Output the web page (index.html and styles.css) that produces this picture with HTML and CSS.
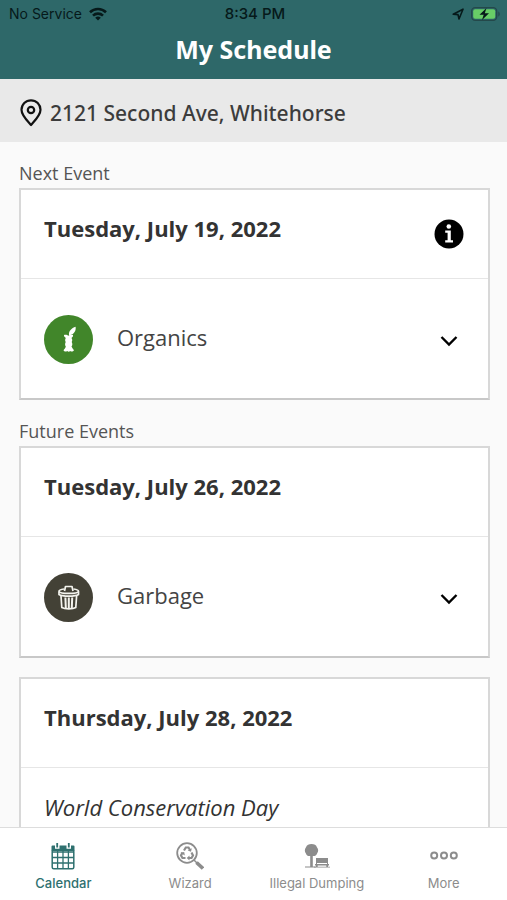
FILE: index.html
```html
<!DOCTYPE html>
<html lang="en">
<head>
<meta charset="utf-8">
<meta name="viewport" content="width=device-width, initial-scale=1">
<title>My Schedule</title>
<link rel="stylesheet" href="styles.css">
</head>
<body>
<header>
  <div class="status">
    <div class="carrier">
      No Service
      <svg width="18" height="14" viewBox="0 0 18 14" fill="none" stroke="#06191a" stroke-width="2.6">
        <path d="M1 5.2a11.6 11.6 0 0 1 16 0"/>
        <path d="M4 8.6a7.2 7.2 0 0 1 10 0"/>
        <path d="M9 13.4L6.2 10.8a4 4 0 0 1 5.6 0z" fill="#06191a" stroke="none"/>
      </svg>
    </div>
    <time class="clock">8:34 PM</time>
    <div class="power">
      <svg width="12" height="12" viewBox="0 0 12 12" fill="none" stroke="#06191a" stroke-width="1.6" stroke-linejoin="round">
        <path d="M1.2 6.2L11 1.2 7 11 6 6.6z"/>
      </svg>
      <svg width="30" height="14" viewBox="0 0 30 14">
        <rect x="0.7" y="0.7" width="25" height="12.6" rx="3.5" fill="none" stroke="#24484a" stroke-width="1.3"/>
        <rect x="2.2" y="2.2" width="22" height="9.6" rx="2" fill="#68ce67"/>
        <path d="M27.3 4.5c1.9.5 1.9 4.5 0 5z" fill="#24484a"/>
        <path d="M15.5 1L8.5 7.8h4.2L11 13l7-6.8h-4.2z" fill="#06191a"/>
      </svg>
    </div>
  </div>
  <h1>My Schedule</h1>
</header>

<div class="address">
  <svg width="22" height="28" viewBox="0 0 22 28" fill="none" stroke="#111" stroke-width="2.2">
    <path d="M11 26C7.5 22 1.5 16.5 1.5 10.8a9.500 9.500 0 0 1 19 0C20.5 16.5 14.5 22 11 26z" stroke-linejoin="round"/>
    <circle cx="11" cy="11" r="3.2"/>
  </svg>
  2121 Second Ave, Whitehorse
</div>

<main>
  <h2>Next Event</h2>
  <section class="card">
    <div class="card-head">
      <h3>Tuesday, July 19, 2022</h3>
      <button class="info" aria-label="Information">
        <svg width="30" height="30" viewBox="0 0 30 30">
          <circle cx="15" cy="15" r="14.5" fill="#000"/>
          <circle cx="14.8" cy="7.5" r="2.3" fill="#fff"/>
          <path d="M11.2 11.5h5.6v9.8H19v2.2h-7.8v-2.2h2.4v-7.600h-2.400z" fill="#fff"/>
        </svg>
      </button>
    </div>
    <button class="pickup">
      <svg class="badge" viewBox="0 0 49 49">
        <circle cx="24.5" cy="24.5" r="24.5" fill="#41862a"/>
        <g fill="#fff">
          <path d="M25 20c-.6-4 2.5-6.8 6.6-8.2.6 4-1.6 7.4-5.1 8.2z"/>
          <path d="M20 20c2-.6 3.5.2 4.5.8.9-.6 2.5-1.3 4.5-.7.3 1.4-.6 2.1-1.5 2.8.9 1.6 1 2.6.2 4 .9 1.6.9 3-.2 4.7.6 1.4 1.6 2.5 2.5 3.6-.9 1.6-2.6 1.8-3.8.8-1 .9-2 .9-3 0-1.2 1-3 .8-3.7-.8 1-1.1 2-2.2 2.3-3.600-1-1.700-.9-3.100-.1-4.700-.8-1.400-.7-2.400.1-4-1-.7-2-1.500-1.800-2.900z"/>
        </g>
      </svg>
      <span>Organics</span>
      <svg class="chevron" viewBox="0 0 18 12"><path d="M1.5 2L9 9.5 16.5 2"/></svg>
    </button>
  </section>

  <h2>Future Events</h2>
  <section class="card">
    <div class="card-head">
      <h3>Tuesday, July 26, 2022</h3>
    </div>
    <button class="pickup">
      <svg class="badge" viewBox="0 0 49 49">
        <circle cx="24.5" cy="24.5" r="24.5" fill="#434136"/>
        <g fill="none" stroke="#f4f4ee" stroke-width="1.7" stroke-linejoin="round">
          <path d="M20 16c-3 .4-5 1-5 2.2 0 3 19.5 3 19.5 0 0-1.2-2-1.8-5-2.2"/>
          <path d="M20.5 18l1-4.5H28l1 4.500"/>
          <path d="M15 18.500v3c3 2.200 16.500 2.200 19.500 0v-3"/>
          <path d="M17 23l.8 11.500c3 1.800 11 1.800 14 0l.8-11.500"/>
          <path d="M21.400 24.500l.4 10.500M24.800 24.500v11M28.200 24.500l-.4 10.500" stroke-width="2"/>
        </g>
      </svg>
      <span>Garbage</span>
      <svg class="chevron" viewBox="0 0 18 12"><path d="M1.5 2L9 9.5 16.5 2"/></svg>
    </button>
  </section>

  <section class="card">
    <div class="card-head">
      <h3>Thursday, July 28, 2022</h3>
    </div>
    <p class="note">World Conservation Day</p>
  </section>
</main>

<nav>
  <a href="#calendar" class="active">
    <svg width="26" height="28" viewBox="0 0 26 28">
      <path d="M2.5 3.5H5v3.2h4.500V3.500h7v3.200H21V3.500h2.500q1 0 1 1V9h-23V4.500q0-1 1-1z" fill="#2e706f"/>
      <path d="M7.200 1v4.500M18.800 1v4.500" stroke="#2e706f" stroke-width="1.8"/>
      <rect x="2.2" y="8" width="21.6" height="18.8" rx="1.5" fill="none" stroke="#2e706f" stroke-width="1.5"/>
      <path d="M2 10h22M2 15.500h22M2 21h22M7.600 9v17.500M13 9v17.500M18.400 9v17.500" fill="none" stroke="#2e706f" stroke-width="1.3"/>
    </svg>
    Calendar
  </a>
  <a href="#wizard">
    <svg width="28" height="28" viewBox="0 0 28 28" fill="none" stroke="#8c8c8c">
      <circle cx="11" cy="11" r="9.8" stroke-width="1.8"/>
      <path d="M20.500 20.500l6.500 6" stroke-width="3.6"/>
      <path d="M18 18l3 3" stroke-width="1.5"/>
      <path d="M8 8.500l1.800-3h2.700l1.700 2.800M15.500 10.500l1.500 3-1.500 2.500h-3M9.500 16h-3L5 13.500l1.500-3" stroke-width="2.2"/>
      <path d="M15.800 6.200l-.8 3.600-3.300-1.200zM13.500 13.500v5L10.700 16zM4.500 10.700l3.700-.7.600 3.400z" fill="#8c8c8c" stroke="none"/>
    </svg>
    Wizard
  </a>
  <a href="#dumping">
    <svg width="26" height="28" viewBox="0 0 26 28" fill="#8c8c8c">
      <path d="M7.500 2c2.700 0 4.900 1 5.400 3.200 1.700 1.600 1.600 4.400.3 6-.6 2.200-2.600 3-4.400 2.800V24.500h3v1H1v-1h5.200V14c-2.200.2-3.800-.6-4.400-2.800C.5 9.600.5 6.900 2 5.200 2.700 3 4.900 2 7.500 2z"/>
      <path d="M12 16h12v4.900H12zM11 22h14v1.500H11zM12 23.500h1.700v2H12zM22.300 23.500H24v2h-1.700zM12 20.500h1v2h-1zM23 20.500h1v2h-1zM10 24.700h16v.8H10z"/>
    </svg>
    Illegal Dumping
  </a>
  <a href="#more">
    <svg width="28" height="28" viewBox="0 0 28 28" fill="none" stroke="#8c8c8c" stroke-width="2">
      <circle cx="4.2" cy="13.500" r="3"/>
      <circle cx="14" cy="13.500" r="3"/>
      <circle cx="23.8" cy="13.500" r="3"/>
    </svg>
    More
  </a>
</nav>
</body>
</html>
```

FILE: styles.css
```css
html, body {
  margin: 0;
  padding: 0;
}
body {
  display: flex;
  flex-direction: column;
  height: 100vh;
  font-family: "Open Sans", "Noto Sans", sans-serif;
  color: #333;
  background-color: #fafafa;
}
h1, h2, h3, p {
  margin: 0;
}
button {
  padding: 0;
  border: none;
  background: none;
  font: inherit;
  color: inherit;
  cursor: pointer;
}
svg {
  display: block;
  flex: none;
}

header {
  background-color: #2e6869;
  color: white;
  padding-bottom: 10px;
}
.status {
  display: grid;
  grid-template-columns: 1fr auto 1fr;
  align-items: center;
  height: 27px;
  padding: 0 6px 0 9px;
  font-family: Inter, sans-serif;
  font-size: 14px;
  color: #06191a;
}
.carrier, .power {
  display: flex;
  align-items: center;
  gap: 7px;
}
.power {
  justify-content: flex-end;
}
.clock {
  font-size: 15px;
  font-weight: 500;
}
h1 {
  padding-top: 3px;
  font-family: "Noto Sans", sans-serif;
  font-size: 25px;
  line-height: 39px;
  font-weight: 700;
  text-align: center;
}

.address {
  display: flex;
  align-items: center;
  gap: 8px;
  height: 63px;
  padding: 4px 20px 0;
  box-sizing: border-box;
  flex: none;
  background-color: #e9e9e9;
  font-family: "Noto Sans", sans-serif;
  font-size: 21px;
  font-weight: 500;
  color: #3c3c3c;
}

main {
  flex: 1;
  min-height: 0;
  overflow: hidden;
  padding: 17px 17px 0 19px;
}
h2 {
  padding-bottom: 1px;
  font-size: 18px;
  line-height: 28px;
  font-weight: 400;
  color: #555;
}
.card {
  margin-bottom: 17px;
  border: 2px solid #d8d8d8;
  border-bottom-color: #c8c8c8;
  background-color: white;
}
.card + .card {
  margin-top: 19px;
}
.card-head {
  display: flex;
  align-items: center;
  justify-content: space-between;
  height: 88px;
  padding: 0 24px 0 23px;
  border-bottom: 1px solid #e6e6e6;
}
h3 {
  padding-bottom: 12px;
  font-size: 22px;
  line-height: 30px;
  font-weight: 700;
}
.pickup {
  display: flex;
  align-items: center;
  width: 100%;
  height: 119px;
  padding: 2px 30px 0 23px;
  text-align: left;
  font-size: 22px;
  line-height: 30px;
  color: #444;
}
.pickup span {
  flex: 1;
  padding: 0 24px 6px;
}
.badge {
  width: 49px;
  height: 49px;
}
.chevron {
  width: 18px;
  height: 12px;
  padding-top: 2px;
  fill: none;
  stroke: #000;
  stroke-width: 2.4;
}
.note {
  padding: 24px 23px;
  font-size: 22px;
  line-height: 30px;
  font-style: italic;
}

nav {
  display: grid;
  grid-template-columns: repeat(4, 1fr);
  height: 73px;
  flex: none;
  box-sizing: border-box;
  padding-top: 14px;
  border-top: 1px solid #ddd;
  background-color: white;
}
nav a {
  display: flex;
  flex-direction: column;
  align-items: center;
  gap: 3px;
  font-family: Inter, sans-serif;
  font-size: 13px;
  line-height: 20px;
  font-weight: 400;
  color: #8c8c8c;
  text-decoration: none;
}
nav a.active {
  font-weight: 500;
  color: #2e706f;
}
```
